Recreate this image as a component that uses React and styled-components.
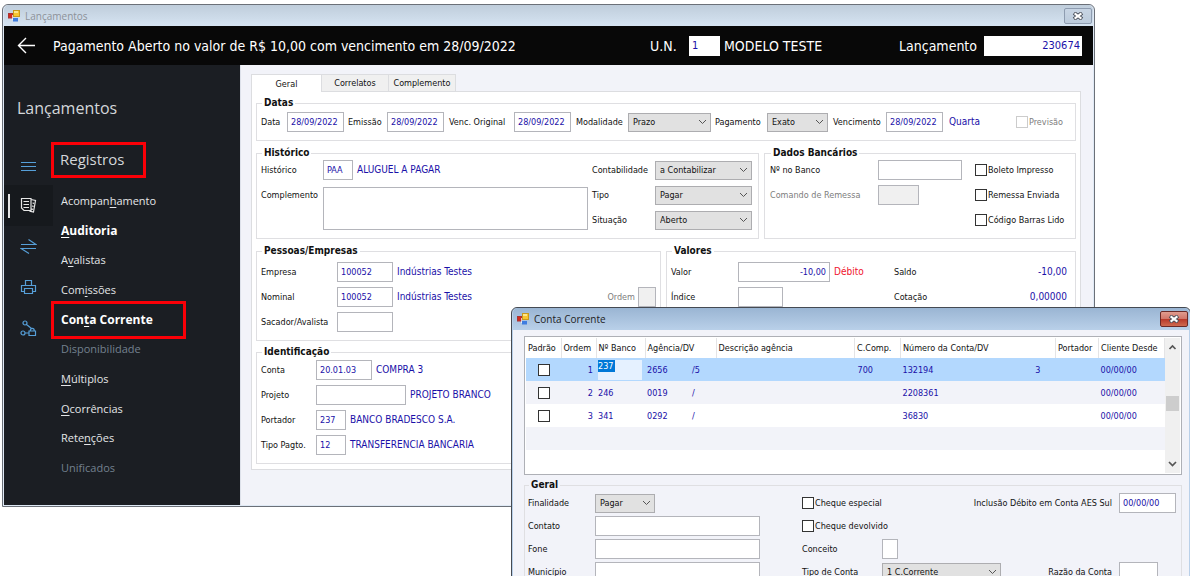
import React from 'react'
import styled, { createGlobalStyle, css } from 'styled-components'

const ink = '#1a10a8';
const uiFont = '"DejaVu Sans Condensed", "Noto Sans", sans-serif';
const menuFont = '"Open Sans", "Noto Sans", sans-serif';

const GlobalStyle = createGlobalStyle`
    *, *::before, *::after { box-sizing: border-box; }
    body {
        margin: 0;
        background: #fff;
        color: #111;
        font: 9px/12px ${uiFont};
    }
    input, select, textarea, button { font: inherit; }
`;

const Desktop = styled.main`
    position: relative;
    height: 100vh;
    overflow: hidden;
    padding: 4px 95px 0 2px;
`;

/* ---------- windows ---------- */

const Window = styled.section`
    border: 1px solid #6b7078;
    border-radius: 6px 6px 0 0;
    background: #dfe9f5;
    padding: 0 1px 1px;
`;

const FrontWindow = styled(Window)`
    position: absolute;
    top: 307px;
    left: 511px;
    right: -1px;
    border-color: #454a52;
    background: #b9d0e9;
`;

const TitleBar = styled.header`
    display: flex;
    align-items: center;
    gap: 5px;
    height: ${({ $active }) => $active ? '22px' : '21px'};
    padding: 0 1px 0 4px;
    border-radius: 5px 5px 0 0;
    background: ${({ $active }) => $active
        ? 'linear-gradient(#9ab5d3, #b9d0e9)'
        : 'linear-gradient(#bfcddb, #d6e4f2)'};
    color: ${({ $active }) => $active ? '#222' : '#8d9299'};
    font: 10px/14px ${menuFont};
    svg { flex: none; }
`;

const WindowName = styled.h1`
    flex: 1;
    margin: 0;
    font: inherit;
`;

const CloseButton = styled.button`
    display: grid;
    place-items: center;
    width: 28px;
    height: 16px;
    padding: 0;
    border: 1px solid ${({ $active }) => $active ? '#6a2a28' : '#8e9cb0'};
    border-radius: 2px;
    background: ${({ $active }) => $active
        ? 'linear-gradient(#e09c8f 0%, #d2766a 48%, #b8392a 52%, #cf6a50 100%)'
        : 'linear-gradient(#c8d5e4, #bccbdc)'};
`;

const AppBar = styled.div`
    display: grid;
    grid-template-columns: 48px 1fr 39px 35px 175px 85px 98px;
    align-items: center;
    height: 39px;
    padding: 0 11px 0 1px;
    background: #080808;
    color: #fff;
    font-size: 14px;
    white-space: nowrap;
`;

const BackButton = styled.button`
    display: flex;
    padding: 0 0 0 12px;
    border: 0;
    background: none;
    color: #fff;
`;

const Heading = styled.h2`
    margin: 0;
    font: inherit;
`;

const Split = styled.div`
    display: grid;
    grid-template-columns: 236px 1fr;
`;

/* ---------- side menu ---------- */

const Sidebar = styled.nav`
    padding-top: 31px;
    background: #1b1e23;
    color: #e4e6e8;
    font: 11px/16px ${menuFont};
`;

const SidebarTitle = styled.h2`
    margin: 0 0 24px 13px;
    font: 400 16px/24px ${menuFont};
    color: #d4d7da;
`;

const SidebarBody = styled.div`
    display: grid;
    grid-template-columns: 47px 1fr;
`;

const IconRail = styled.div`
    display: grid;
    align-content: start;
    grid-auto-rows: 41px;
`;

const RailButton = styled.button`
    display: grid;
    place-items: center;
    width: 49px;
    padding: 0;
    border: 0;
    background: ${({ $current }) => $current ? '#16191d' : 'none'};
    color: ${({ $current }) => $current ? '#e6e6e6' : '#569fd8'};
    position: relative;
    &::before {
        content: '';
        display: ${({ $current }) => $current ? 'block' : 'none'};
        position: absolute;
        left: 4px;
        top: 9px;
        width: 2px;
        height: 24px;
        background: #e6e6e6;
    }
`;

const redFrame = css`
    border: 3px solid #fb0007;
`;

const MenuTitle = styled.h3`
    ${redFrame}
    width: 95px;
    height: 36px;
    margin: -2px 0 8px;
    padding-left: 6px;
    font: 400 15px/29px ${menuFont};
    color: #d4d7da;
`;

const Menu = styled.ul`
    display: grid;
    grid-auto-rows: 1fr;
    height: 297px;
    margin: 0;
    padding: 0;
    list-style: none;
`;

const MenuItem = styled.li`
    display: flex;
    align-items: center;
    position: relative;
`;

const MenuLink = styled.a`
    padding-left: 10px;
    color: ${({ $off, $strong }) => $off ? '#74818f' : $strong ? '#fff' : '#e4e6e8'};
    font-weight: ${({ $strong }) => $strong ? 700 : 400};
    font-size: ${({ $strong }) => $strong ? '12px' : '11px'};
    text-decoration: none;
    u { text-underline-offset: 2px; }
    ${({ $framed }) => $framed && css`
        &::after {
            content: '';
            ${redFrame}
            position: absolute;
            left: 0;
            top: -4px;
            width: 135px;
            height: 38px;
        }
    `}
`;

/* ---------- forms ---------- */

const Page = styled.div`
    min-width: 0;
    padding: 9px 12px 35px 10px;
    border-left: 1px solid #dde1ea;
    background: #f2f3f9;
`;

const Tabs = styled.div`
    display: flex;
    align-items: flex-end;
`;

const Tab = styled.button`
    width: ${({ $current }) => $current ? '71px' : '67px'};
    height: ${({ $current }) => $current ? '18px' : '17px'};
    margin-bottom: ${({ $current }) => $current ? '-1px' : '0'};
    padding: 0;
    border: 1px solid #dcdde0;
    border-width: 1px 1px 0 ${({ $current }) => $current ? '1px' : '0'};
    background: ${({ $current }) => $current ? '#fff' : '#f0f0f0'};
    color: #111;
    z-index: 1;
`;

const TabPanel = styled.div`
    display: grid;
    gap: 6px;
    padding: 5px 4px;
    border: 1px solid #dcdde0;
    background: #fff;
`;

const Columns = styled.div`
    display: grid;
    grid-template-columns: ${({ $cols }) => $cols};
    gap: 5px;
`;

const Stack = styled.div`
    display: grid;
    align-content: start;
    gap: 5px;
`;

const Group = styled.fieldset`
    min-width: 0;
    margin: 0;
    padding: ${({ $pad }) => $pad || '1px 6px 8px 4px'};
    border: 1px solid #dfdfe2;
    white-space: nowrap;
`;

const Legend = styled.legend`
    margin-left: 1px;
    padding: 0 2px;
    font-weight: 700;
    font-size: 10px;
    line-height: 12px;
`;

const Fields = styled.div`
    display: grid;
    grid-template-columns: ${({ $cols }) => $cols};
    grid-auto-rows: 20px;
    row-gap: ${({ $gap }) => $gap || '5px'};
    align-items: center;
`;

const Line = styled.div`
    display: flex;
    align-items: center;
    gap: 3px;
    min-width: 0;
`;

const Label = styled.label`
    color: ${({ $off }) => $off ? '#7d7d7d' : '#111'};
    grid-column: ${({ $col }) => $col || 'auto'};
    justify-self: ${({ $end }) => $end ? 'end' : 'start'};
    padding-right: ${({ $end }) => $end ? '7px' : '0'};
`;

const PushedLabel = styled(Label)`
    margin-left: auto;
`;

const Output = styled.output`
    color: ${({ $tone }) => $tone || ink};
    text-align: ${({ $right }) => $right ? 'right' : 'left'};
    padding: 0 2px 0 1px;
    font-size: 10px;
`;

const Input = styled.input`
    width: ${({ $w }) => $w || '57px'};
    height: 20px;
    padding: 0 3px;
    border: 1px solid #b4b5bb;
    border-radius: 0;
    background: ${({ disabled }) => disabled ? '#f0f0f0' : '#fff'};
    color: ${ink};
    text-align: ${({ $right }) => $right ? 'right' : 'left'};
    outline: 0;
`;

const BarInput = styled(Input)`
    padding: 0 1px 0 2px;
    border-color: #fff;
    font-size: 11px;
`;

const TextArea = styled.textarea`
    align-self: end;
    grid-row: span 2;
    width: calc(100% - 4px);
    height: 43px;
    border: 1px solid #b4b5bb;
    color: ${ink};
    resize: none;
`;

const SelectBox = styled.div`
    display: grid;
    align-items: center;
    width: ${({ $w }) => $w};
    select {
        grid-area: 1 / 1;
        width: 100%;
        height: 19px;
        padding: 0 4px;
        border: 1px solid #adadb0;
        border-radius: 0;
        background: #e1e1e1;
        color: #111;
        appearance: none;
    }
    svg {
        grid-area: 1 / 1;
        justify-self: end;
        margin-right: 4px;
        pointer-events: none;
    }
`;

const CheckLabel = styled.label`
    display: flex;
    align-items: center;
    gap: 1px;
    color: ${({ $off }) => $off ? '#7d7d7d' : '#111'};
    grid-column: ${({ $col }) => $col || 'auto'};
`;

const CheckInput = styled.input`
    appearance: none;
    flex: none;
    width: 12px;
    height: 12px;
    margin: 0;
    border: 1px solid ${({ disabled }) => disabled ? '#ccc' : '#333'};
    background: #fff;
`;

/* ---------- accounts grid ---------- */

const WindowBody = styled.div`
    padding: 6px 7px 20px 11px;
    background: #f2f3f9;
`;

const TableFrame = styled.div`
    display: flex;
    margin-bottom: 4px;
    padding: 1px;
    border: 1px solid #aeb0b6;
    background: #fff;
`;

const Table = styled.table`
    flex: 1;
    border-collapse: collapse;
    table-layout: fixed;
    white-space: nowrap;
    color: ${ink};
`;

const Th = styled.th`
    width: ${({ $w }) => $w || 'auto'};
    height: 20px;
    padding: 0 2px;
    border-right: 1px solid #e4e4e6;
    color: #111;
    font-weight: 400;
    text-align: left;
`;

const Tr = styled.tr`
    height: 23px;
    background: ${({ $selected }) => $selected ? '#b3d8fe' : '#fff'};
    &:nth-child(even) { background: #f2f3f9; }
`;

const Td = styled.td`
    padding: ${({ $pad }) => $pad || '0 3px'};
    text-align: ${({ $align }) => $align || 'left'};
`;

const TickCell = styled(Td)`
    input { display: block; margin: 0 auto; }
`;

const Pair = styled.div`
    display: flex;
    justify-content: ${({ $spread }) => $spread ? 'space-between' : 'flex-start'};
    span:first-child { min-width: 45px; }
`;

const CellEditor = styled.div`
    height: 20px;
    width: 44px;
    background: #e5f1ff;
    input {
        display: block;
        width: 17px;
        height: 12px;
        padding: 0;
        border: 0;
        outline: 0;
        background: #0078d7;
        color: #fff;
    }
`;

const ScrollBar = styled.div`
    display: flex;
    flex-direction: column;
    align-items: center;
    width: 15px;
    padding: 6px 0;
    background: #f0f0f0;
    i {
        width: 13px;
        height: 15px;
        margin: 46px 0 auto;
        background: #cdcdcd;
    }
`;

/* ---------- drawings ---------- */

const FormIcon = () => (
    <svg width="12" height="12" viewBox="0 0 12 12">
        <rect x="0.5" y="3.5" width="4" height="4.5" fill="#d42a1c" stroke="#a33" />
        <rect x="5.5" y="0.5" width="6" height="6" fill="#f7c531" stroke="#c99a1b" />
        <rect x="6" y="1" width="4" height="2" fill="#fde58a" />
        <rect x="5" y="8" width="5" height="3.5" fill="#3f7de0" />
        <rect x="4" y="5" width="1" height="5" fill="#fff" opacity="0.7" />
    </svg>
);

const CloseMark = () => (
    <svg width="12" height="8" viewBox="0 0 12 8">
        <path d="M2 1 10 7M10 1 2 7" stroke="#4a4f5a" strokeWidth="4" />
        <path d="M2.600 1.400 9.400 6.600M9.400 1.400 2.600 6.600" stroke="#fff" strokeWidth="2" />
    </svg>
);

const Chevron = ({ up, bold }) => (
    <svg width="9" height="6" viewBox="0 0 9 6" fill="none" stroke="#555" strokeWidth={bold ? 1.7 : 1}>
        <path d={up ? 'M1.5 5 4.5 2 7.5 5' : 'M1 1 4.5 4.5 8 1'} />
    </svg>
);

const BackArrow = () => (
    <svg width="19" height="17" viewBox="0 0 19 17" fill="none" stroke="currentColor" strokeWidth="1.4">
        <path d="M18 8.5H1.5M9 1 1.5 8.5 9 16" />
    </svg>
);

const RailIcon = ({ children }) => (
    <svg width="17" height="17" viewBox="0 0 17 17" fill="none" stroke="currentColor" strokeWidth="1.2">
        {children}
    </svg>
);

const railIcons = [
    ['Menu', <path d="M1 6.5h15M1 10.500h15M1 14.500h15" />],
    ['Registros', <path d="M11 13.500H4L1.500 11V1.500H11zM11 2.500l4.500 1-2 11.500-3.500-.8v-1M3.500 4.500H9M3.500 7.500H9M3.500 10.500H9M12.500 6l1.600.3M12 9l1.600.3M11.500 12l1.600.3" />],
    ['Movimentos', <path d="M1 6.500h15L8.500 1.500M16 10.500H1L9 15.500" />],
    ['Imprimir', <path d="M5.500 6.500v-5h6v5M4.500 12.500h-3v-6h14v6h-3M4.500 9.500h8v5h-8z" />],
    ['Processos', <path d="M7 3a2 2 0 1 1-4 0 2 2 0 0 1 4 0zM5 13a2 2 0 1 1-4 0 2 2 0 0 1 4 0zM5 13h4M6.500 4.500l5 4M9 11h6.500v4.500H9zM10.300 11c0-3.600 4-3.600 4 0" />],
];

/* ---------- parts ---------- */

const Check = ({ text, ...rest }) => (
    <CheckLabel $off={rest.disabled} $col={rest.$col}>
        <CheckInput type="checkbox" disabled={rest.disabled} />{text}
    </CheckLabel>
);

const Select = ({ id, w, options }) => (
    <SelectBox $w={w}>
        <select id={id}>
            {options.map(o => <option key={o}>{o}</option>)}
        </select>
        <Chevron />
    </SelectBox>
);

const menu = [
    { text: <>Acompan<u>h</u>amento</> },
    { text: <><u>A</u>uditoria</>, strong: true },
    { text: <>A<u>v</u>alistas</> },
    { text: <>Com<u>i</u>ssões</> },
    { text: <>Con<u>t</u>a Corrente</>, strong: true, framed: true },
    { text: 'Disponibilidade', off: true },
    { text: <><u>M</u>últiplos</> },
    { text: <><u>O</u>corrências</> },
    { text: <>Rete<u>n</u>ções</> },
    { text: 'Unificados', off: true },
];

const accounts = [
    { ordem: 1, banco: '237', agencia: '2656', dv: '/5', comp: '700', conta: '132194', digito: '3' },
    { ordem: 2, banco: '246', agencia: '0019', dv: '/', conta: '2208361' },
    { ordem: 3, banco: '341', agencia: '0292', dv: '/', conta: '36830' },
];

const SideMenu = () => (
    <Sidebar>
        <SidebarTitle>Lançamentos</SidebarTitle>
        <SidebarBody>
            <IconRail>
                {railIcons.map(([name, shape], i) => (
                    <RailButton key={name} aria-label={name} $current={i === 1}>
                        <RailIcon>{shape}</RailIcon>
                    </RailButton>
                ))}
            </IconRail>
            <div>
                <MenuTitle>Registros</MenuTitle>
                <Menu>
                    {menu.map(({ text, strong, off, framed }, i) => (
                        <MenuItem key={i}>
                            <MenuLink href="#" $strong={strong} $off={off} $framed={framed}>{text}</MenuLink>
                        </MenuItem>
                    ))}
                </Menu>
            </div>
        </SidebarBody>
    </Sidebar>
);

const GeneralForm = () => (
    <TabPanel>
        <Group $pad="3px 6px 8px 4px">
            <Legend>Datas</Legend>
            <Fields $cols="26px 61px 39px 62px 65px 62px 52px 87px 52px 66px 53px 62px 1fr 53px">
                <Label htmlFor="data">Data</Label>
                <Input id="data" defaultValue="28/09/2022" />
                <Label htmlFor="emissao">Emissão</Label>
                <Input id="emissao" defaultValue="28/09/2022" />
                <Label htmlFor="original">Venc. Original</Label>
                <Input id="original" defaultValue="28/09/2022" />
                <Label htmlFor="modalidade">Modalidade</Label>
                <Select id="modalidade" w="83px" options={['Prazo']} />
                <Label htmlFor="pagamento">Pagamento</Label>
                <Select id="pagamento" w="61px" options={['Exato']} />
                <Label htmlFor="vencimento">Vencimento</Label>
                <Input id="vencimento" defaultValue="28/09/2022" />
                <Output>Quarta</Output>
                <Check text="Previsão" disabled />
            </Fields>
        </Group>

        <Columns $cols="503fr 312fr">
            <Group>
                <Legend>Histórico</Legend>
                <Fields $cols="62px 1fr 63px 97px">
                    <Label htmlFor="historico">Histórico</Label>
                    <Line>
                        <Input id="historico" $w="30px" defaultValue="PAA" />
                        <Output>ALUGUEL A PAGAR</Output>
                    </Line>
                    <Label htmlFor="contabilidade">Contabilidade</Label>
                    <Select id="contabilidade" w="97px" options={['a Contabilizar']} />
                    <Label htmlFor="complemento">Complemento</Label>
                    <TextArea id="complemento" />
                    <Label htmlFor="tipo">Tipo</Label>
                    <Select id="tipo" w="97px" options={['Pagar']} />
                    <Label htmlFor="situacao" $col="3">Situação</Label>
                    <Select id="situacao" w="97px" options={['Aberto']} />
                </Fields>
            </Group>
            <Group $pad="1px 6px 8px 5px">
                <Legend>Dados Bancários</Legend>
                <Fields $cols="108px 97px 1fr">
                    <Label htmlFor="nobanco">Nº no Banco</Label>
                    <Input id="nobanco" $w="84px" />
                    <Check text="Boleto Impresso" />
                    <Label htmlFor="remessa" $off>Comando de Remessa</Label>
                    <Input id="remessa" $w="41px" disabled />
                    <Check text="Remessa Enviada" />
                    <Check text="Código Barras Lido" $col="3" />
                </Fields>
            </Group>
        </Columns>

        <Columns $cols="405fr 410fr">
            <Stack>
                <Group $pad="5px 4px 8px 4px">
                    <Legend>Pessoas/Empresas</Legend>
                    <Fields $cols="76px 1fr">
                        <Label htmlFor="empresa">Empresa</Label>
                        <Line>
                            <Input id="empresa" $w="56px" defaultValue="100052" />
                            <Output>Indústrias Testes</Output>
                        </Line>
                        <Label htmlFor="nominal">Nominal</Label>
                        <Line>
                            <Input id="nominal" $w="56px" defaultValue="100052" />
                            <Output>Indústrias Testes</Output>
                            <PushedLabel htmlFor="ordem" $off>Ordem</PushedLabel>
                            <Input id="ordem" $w="18px" disabled />
                        </Line>
                        <Label htmlFor="sacador">Sacador/Avalista</Label>
                        <Input id="sacador" $w="56px" />
                    </Fields>
                </Group>
                <Group $pad="2px 4px 8px 4px">
                    <Legend>Identificação</Legend>
                    <Fields $cols="55px 1fr">
                        <Label htmlFor="conta">Conta</Label>
                        <Line>
                            <Input id="conta" $w="56px" defaultValue="20.01.03" />
                            <Output>COMPRA 3</Output>
                        </Line>
                        <Label htmlFor="projeto">Projeto</Label>
                        <Line>
                            <Input id="projeto" $w="90px" />
                            <Output>PROJETO BRANCO</Output>
                        </Line>
                        <Label htmlFor="portador">Portador</Label>
                        <Line>
                            <Input id="portador" $w="30px" defaultValue="237" />
                            <Output>BANCO BRADESCO S.A.</Output>
                        </Line>
                        <Label htmlFor="pagto">Tipo Pagto.</Label>
                        <Line>
                            <Input id="pagto" $w="30px" defaultValue="12" />
                            <Output>TRANSFERENCIA BANCARIA</Output>
                        </Line>
                    </Fields>
                </Group>
            </Stack>
            <Group $pad="5px 6px 8px 4px">
                <Legend>Valores</Legend>
                <Fields $cols="67px 156px 1fr 1fr">
                    <Label htmlFor="valor">Valor</Label>
                    <Line>
                        <Input id="valor" $w="92px" $right defaultValue="-10,00" />
                        <Output $tone="#f0142d">Débito</Output>
                    </Line>
                    <span>Saldo</span>
                    <Output $right>-10,00</Output>
                    <Label htmlFor="indice">Índice</Label>
                    <Input id="indice" $w="45px" />
                    <span>Cotação</span>
                    <Output $right>0,00000</Output>
                </Fields>
            </Group>
        </Columns>
    </TabPanel>
);

const AccountsTable = () => (
    <TableFrame>
        <Table>
            <thead>
                <tr>
                    <Th $w="35px">Padrão</Th>
                    <Th $w="35px">Ordem</Th>
                    <Th $w="49px">Nº Banco</Th>
                    <Th $w="71px">Agência/DV</Th>
                    <Th>Descrição agência</Th>
                    <Th $w="46px">C.Comp.</Th>
                    <Th $w="155px">Número da Conta/DV</Th>
                    <Th $w="43px">Portador</Th>
                    <Th $w="66px">Cliente Desde</Th>
                </tr>
            </thead>
            <tbody>
                {accounts.map(a => (
                    <Tr key={a.ordem} $selected={a.ordem === 1}>
                        <TickCell><CheckInput type="checkbox" aria-label="Padrão" /></TickCell>
                        <Td $align="right">{a.ordem}</Td>
                        <Td $pad="0 2px">
                            {a.ordem === 1
                                ? <CellEditor><input aria-label="Nº Banco" defaultValue={a.banco} /></CellEditor>
                                : a.banco}
                        </Td>
                        <Td $pad="0 2px"><Pair><span>{a.agencia}</span><span>{a.dv}</span></Pair></Td>
                        <Td />
                        <Td>{a.comp}</Td>
                        <Td $pad="0 15px 0 2px"><Pair $spread><span>{a.conta}</span><span>{a.digito}</span></Pair></Td>
                        <Td />
                        <Td $pad="0 2px">00/00/00</Td>
                    </Tr>
                ))}
                <Tr><Td colSpan="9" /></Tr>
                <Tr><Td colSpan="9" /></Tr>
            </tbody>
        </Table>
        <ScrollBar>
            <Chevron up bold />
            <i />
            <Chevron bold />
        </ScrollBar>
    </TableFrame>
);

const AccountForm = () => (
    <Group $pad="2px 5px 8px 3px">
        <Legend>Geral</Legend>
        <Fields $cols="67px 207px 80px 119px 1fr 57px" $gap="3px">
            <Label htmlFor="finalidade">Finalidade</Label>
            <Select id="finalidade" w="60px" options={['Pagar']} />
            <Check text="Cheque especial" />
            <Label htmlFor="inclusao" $col="4 / 6" $end>Inclusão Débito em Conta AES Sul</Label>
            <Input id="inclusao" defaultValue="00/00/00" />

            <Label htmlFor="contato">Contato</Label>
            <Input id="contato" $w="165px" />
            <Check text="Cheque devolvido" />

            <Label htmlFor="fone" $col="1">Fone</Label>
            <Input id="fone" $w="165px" />
            <Label htmlFor="conceito">Conceito</Label>
            <Input id="conceito" $w="16px" />

            <Label htmlFor="municipio" $col="1">Município</Label>
            <Input id="municipio" $w="165px" />
            <Label htmlFor="tipoconta">Tipo de Conta</Label>
            <Select id="tipoconta" w="119px" options={['1 C.Corrente']} />
            <Label htmlFor="razao" $end>Razão da Conta</Label>
            <Input id="razao" $w="39px" />
        </Fields>
    </Group>
);

const App = () => {
    return (
        <>
            <GlobalStyle />
            <Desktop>
                <Window>
                    <TitleBar>
                        <FormIcon />
                        <WindowName>Lançamentos</WindowName>
                        <CloseButton aria-label="Fechar"><CloseMark /></CloseButton>
                    </TitleBar>
                    <AppBar>
                        <BackButton aria-label="Voltar"><BackArrow /></BackButton>
                        <Heading>Pagamento Aberto no valor de R$ 10,00 com vencimento em 28/09/2022</Heading>
                        <label htmlFor="un">U.N.</label>
                        <BarInput id="un" $w="31px" defaultValue="1" />
                        <span>MODELO TESTE</span>
                        <label htmlFor="lancamento">Lançamento</label>
                        <BarInput id="lancamento" $w="98px" $right defaultValue="230674" />
                    </AppBar>
                    <Split>
                        <SideMenu />
                        <Page>
                            <Tabs>
                                <Tab $current>Geral</Tab>
                                <Tab>Correlatos</Tab>
                                <Tab>Complemento</Tab>
                            </Tabs>
                            <GeneralForm />
                        </Page>
                    </Split>
                </Window>

                <FrontWindow>
                    <TitleBar $active>
                        <FormIcon />
                        <WindowName>Conta Corrente</WindowName>
                        <CloseButton $active aria-label="Fechar"><CloseMark /></CloseButton>
                    </TitleBar>
                    <WindowBody>
                        <AccountsTable />
                        <AccountForm />
                    </WindowBody>
                </FrontWindow>
            </Desktop>
        </>
    )
}

export default App
